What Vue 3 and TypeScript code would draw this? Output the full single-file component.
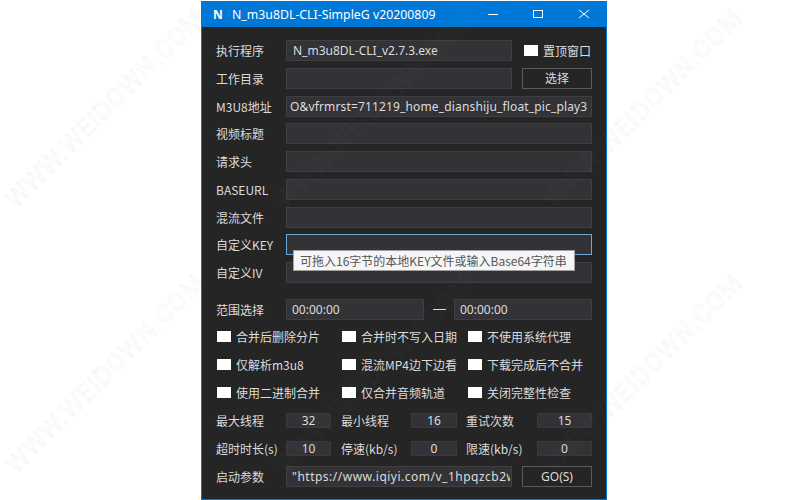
<script setup lang="ts">
import { ref } from 'vue'

type Field = { label: string; value: string; focus?: boolean }

const exePath = ref('N_m3u8DL-CLI_v2.7.3.exe')
const args = ref('"https://www.iqiyi.com/v_1hpqzcb2w8&vfrmrst=711219')

const fields: Field[] = [
  { label: 'M3U8地址', value: 'O&vfrmrst=711219_home_dianshiju_float_pic_play3' },
  { label: '视频标题', value: '' },
  { label: '请求头', value: '' },
  { label: 'BASEURL', value: '' },
  { label: '混流文件', value: '' },
  { label: '自定义KEY', value: '', focus: true },
  { label: '自定义IV', value: '' },
]

const options = [
  '合并后删除分片',
  '合并时不写入日期',
  '不使用系统代理',
  '仅解析m3u8',
  '混流MP4边下边看',
  '下载完成后不合并',
  '使用二进制合并',
  '仅合并音频轨道',
  '关闭完整性检查',
]

const numbers = [
  { label: '最大线程', value: 32 },
  { label: '最小线程', value: 16 },
  { label: '重试次数', value: 15 },
  { label: '超时时长(s)', value: 10 },
  { label: '停速(kb/s)', value: 0 },
  { label: '限速(kb/s)', value: 0 },
]

// watermark repeats on a grid across the whole picture
const marks = [106, 375, 644].flatMap((x) => [110, 375].map((y) => ({ x, y })))
</script>

<template>
  <div class="window">
    <header class="titlebar">
      <span class="app-icon">N</span>
      <span class="title">N_m3u8DL-CLI-SimpleG v20200809</span>
      <div class="controls">
        <svg width="46" height="26" viewBox="0 0 46 26"><path d="M20 13.5h10" stroke="#fff" fill="none" /></svg>
        <svg width="46" height="26" viewBox="0 0 46 26"><rect x="19.5" y="9.5" width="9" height="7" stroke="#fff" fill="none" /></svg>
        <svg width="46" height="26" viewBox="0 0 46 26"><path d="M19 9l10 8M29 9l-10 8" stroke="#fff" fill="none" /></svg>
      </div>
    </header>

    <main class="content">
      <div class="row">
        <label class="label">执行程序</label>
        <input class="input wide" :value="exePath" readonly />
        <span class="box top-box"></span>
        <span class="top-text">置顶窗口</span>
      </div>
      <div class="row">
        <label class="label">工作目录</label>
        <input class="input wide" readonly />
        <button class="btn">选择</button>
      </div>
      <div v-for="f in fields" :key="f.label" class="row">
        <label class="label">{{ f.label }}</label>
        <input :class="['input', 'full', { focus: f.focus }]" :value="f.value" readonly />
        <div v-if="f.focus" class="tooltip">可拖入16字节的本地KEY文件或输入Base64字符串</div>
      </div>

      <div class="row range">
        <label class="label">范围选择</label>
        <input class="input time" value="00:00:00" readonly />
        <span class="dash"></span>
        <input class="input time" value="00:00:00" readonly />
      </div>

      <div class="options">
        <div v-for="o in options" :key="o" class="option">
          <span class="box"></span>
          <span>{{ o }}</span>
        </div>
      </div>

      <div class="numbers">
        <div v-for="n in numbers" :key="n.label" class="num">
          <span class="num-label">{{ n.label }}</span>
          <span class="num-value">{{ n.value }}</span>
        </div>
      </div>

      <div class="row">
        <label class="label">启动参数</label>
        <input class="input wide args" :value="args" readonly />
        <button class="btn">GO(S)</button>
      </div>
    </main>
  </div>

  <svg class="marks" width="790" height="500" viewBox="0 0 790 500" aria-hidden="true">
    <text
      v-for="m in marks"
      :key="`${m.x}-${m.y}`"
      :x="m.x"
      :y="m.y"
      :transform="`rotate(-45 ${m.x} ${m.y})`"
      text-anchor="middle"
      dominant-baseline="middle"
      textLength="268"
      class="mark"
    >WWW.WEIDOWN.COM</text>
  </svg>
</template>

<style>
html,
body {
  background: #fff;
  overflow: hidden;
}
</style>

<style scoped>
.window {
  box-sizing: border-box;
  width: 406px;
  height: 499px;
  margin: 1px 0 0 201px;
  border: 1px solid #0078d7;
  border-top: none;
  background: #252526;
  color: #dcdcdc;
  font-family: "Noto Sans CJK SC", "Noto Sans", sans-serif;
  font-size: 12px;
}

.titlebar {
  display: flex;
  align-items: center;
  height: 26px;
  background: #0078d7;
  color: #fff;
}

.app-icon {
  width: 30px;
  padding-left: 11px;
  box-sizing: border-box;
  font-family: "Noto Sans", sans-serif;
  font-weight: 700;
  font-size: 12px;
}

.title {
  flex: 1;
  font-family: "Noto Sans", sans-serif;
  font-size: 12.3px;
}

.controls {
  display: flex;
}

.content {
  display: flex;
  flex-direction: column;
  padding: 13px 14px 0 14px;
}

.row {
  position: relative;
  display: flex;
  align-items: center;
  height: 21px;
  margin-bottom: 6.75px;
}

.label {
  width: 70px;
  flex: none;
  white-space: nowrap;
}

.input {
  box-sizing: border-box;
  height: 21px;
  padding: 0 6px;
  border: 1px solid #3f3f42;
  border-radius: 0;
  outline: none;
  background: #333337;
  color: #dcdcdc;
  font-family: "Noto Sans", "Noto Sans CJK SC", sans-serif;
  font-size: 12px;
}

.wide {
  width: 226px;
}

.full {
  width: 306px;
  padding: 0 3px;
  letter-spacing: 0.15px;
}

.focus {
  border-color: #6ea6d6;
}

.btn {
  box-sizing: border-box;
  width: 70px;
  height: 21px;
  margin-left: 10px;
  border: 1px solid #5a5a5c;
  background: #252526;
  color: #dcdcdc;
  font-family: "Noto Sans", "Noto Sans CJK SC", sans-serif;
  font-size: 12px;
  padding: 0;
}

.box {
  flex: none;
  width: 14px;
  height: 11px;
  background: #fff;
}

.top-box {
  margin-left: 12px;
}

.top-text {
  margin-left: 5px;
  white-space: nowrap;
}

.tooltip {
  position: absolute;
  left: 77px;
  top: 16px;
  z-index: 2;
  box-sizing: border-box;
  width: 282px;
  height: 21px;
  line-height: 19px;
  padding-left: 6px;
  border: 1px solid #a0a0a0;
  background: #f5f5f5;
  color: #575757;
  white-space: nowrap;
}

.range {
  margin-top: 9.25px;
}

.time {
  width: 138px;
  padding: 0 5px;
}

.dash {
  width: 13px;
  height: 1px;
  margin: 0 8px 0 9px;
  background: #dcdcdc;
}

.options {
  display: grid;
  grid-template-columns: 125px 126px 1fr;
  grid-auto-rows: 28px;
  margin-top: -4.75px;
  padding-left: 1px;
}

.option {
  display: flex;
  align-items: center;
  gap: 5px;
  white-space: nowrap;
}

.numbers {
  display: grid;
  grid-template-columns: 125px 125px 1fr;
  grid-auto-rows: 28px;
  margin-bottom: 4px;
}

.num {
  display: flex;
  align-items: center;
}

.num-label {
  width: 70px;
  flex: none;
  white-space: nowrap;
}

.num-value {
  box-sizing: border-box;
  width: 45px;
  height: 15px;
  line-height: 14px;
  text-align: center;
  background: #333337;
  border: 1px solid #3a3a3d;
  font-family: "Noto Sans", sans-serif;
}

.num:nth-child(3n) .num-value {
  width: 55px;
  margin-left: 1px;
}

.num:nth-child(3n + 2) .num-value {
  width: 46px;
}

.args {
  padding: 0 1px 0 5px;
  letter-spacing: 0.5px;
}

.marks {
  position: absolute;
  left: 0;
  top: 0;
  pointer-events: none;
}

.mark {
  font-family: Roboto, sans-serif;
  font-size: 25px;
  fill: none;
  stroke: rgba(120, 120, 120, 0.08);
  stroke-width: 1;
}
</style>
